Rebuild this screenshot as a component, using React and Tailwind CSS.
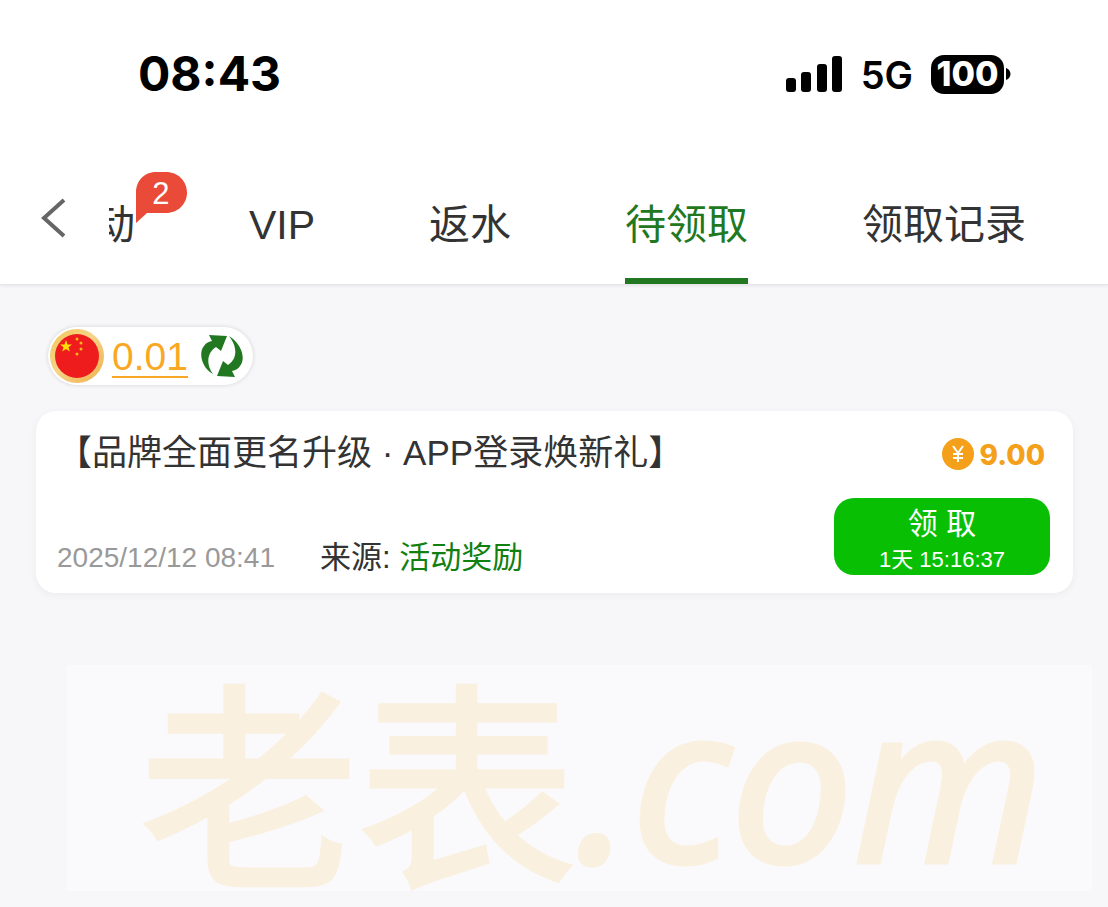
import React from 'react';

const tabs = [
  { label: '活动', badge: 2 },
  { label: 'VIP' },
  { label: '返水' },
  { label: '待领取', active: true },
  { label: '领取记录' },
];

function StatusBar() {
  return (
    <div className="flex h-[148px] items-center justify-between pr-[97px] pl-[138px] font-['Inter',sans-serif] text-black">
      <time className="text-[48px] leading-none font-bold">08:43</time>
      <div className="flex items-center gap-[18px]">
        <svg className="h-[36px] w-[58px]" viewBox="0 0 58 36" role="img" aria-label="信号">
          <rect x="1" y="22" width="10" height="14" rx="3" />
          <rect x="16" y="16" width="10" height="20" rx="3" />
          <rect x="32" y="8" width="10" height="28" rx="3" />
          <rect x="47" y="0" width="10" height="36" rx="3" />
        </svg>
        <span className="pt-[2px] text-[38px] leading-none font-semibold">5G</span>
        <div className="flex items-center gap-[2px]">
          <span className="flex h-[39px] w-[73px] items-center justify-center rounded-[13px] bg-black text-[34px] leading-none font-extrabold text-white">
            100
          </span>
          <svg className="h-[12px] w-[5px]" viewBox="0 0 5 12" aria-hidden="true">
            <path d="M0 0C6 2 6 10 0 12Z" />
          </svg>
        </div>
      </div>
    </div>
  );
}

function Badge({ count }) {
  return (
    <span className="absolute -top-[33px] left-full flex h-[51px] w-[52px] justify-center text-[31px] leading-[44px] text-white">
      <svg className="absolute inset-0 h-full w-full" viewBox="0 0 52 51" aria-hidden="true">
        <path d="M1 51V21C1 9 9 0 21 0H31C43 0 52 9 52 20.500C52 32 43 41 31 41H12Z" fill="#e94b38" />
      </svg>
      <span className="relative">{count}</span>
    </span>
  );
}

function TabBar() {
  return (
    <nav className="flex h-[136px] items-stretch">
      <button type="button" aria-label="返回" className="w-[109px] shrink-0 pt-[4px] pl-[40px]">
        <svg className="h-[40px] w-[27px]" viewBox="0 0 27 40" fill="none" stroke="#666" strokeWidth="4" aria-hidden="true">
          <path d="M24 2L4 20L24 38" />
        </svg>
      </button>
      <div className="flex min-w-0 flex-1 justify-end gap-[114px] overflow-hidden pr-[82px]">
        {tabs.map((tab) => (
          <button
            key={tab.label}
            type="button"
            aria-current={tab.active ? 'page' : undefined}
            className={
              tab.active
                ? 'shrink-0 border-b-[6px] border-[#217821] pt-[24px] text-[41px] leading-[41px] text-[#217821]'
                : 'shrink-0 border-b-[6px] border-transparent pt-[24px] text-[41px] leading-[41px] text-[#333]'
            }
          >
            <span className="relative block">
              {tab.label}
              {tab.badge && <Badge count={tab.badge} />}
            </span>
          </button>
        ))}
      </div>
    </nav>
  );
}

function FlagIcon() {
  return (
    <svg className="h-[56px] w-[56px]" viewBox="0 0 56 56" role="img" aria-label="CNY">
      <defs>
        <linearGradient id="ring" x1="0" y1="0" x2="1" y2="1">
          <stop offset="0" stopColor="#f0c858" />
          <stop offset="0.45" stopColor="#f6d488" />
          <stop offset="1" stopColor="#eeb04c" />
        </linearGradient>
      </defs>
      <circle cx="29" cy="28" r="27" fill="url(#ring)" />
      <circle cx="29" cy="28" r="22" fill="#ee1c1c" />
      <path d="M18 12L19.500 16.500H24L20.500 19.200L21.800 23.500L18 21L14.200 23.500L15.500 19.200L12 16.500H16.500Z" fill="#ffde00" />
      <g fill="#f9b51c">
        <circle cx="29" cy="11" r="1.500" />
        <circle cx="33" cy="15" r="1.500" />
        <circle cx="33" cy="21" r="1.500" />
        <circle cx="29" cy="26" r="1.500" />
      </g>
    </svg>
  );
}

function Balance() {
  return (
    <div className="ml-[12px] flex h-[58px] w-fit items-center rounded-full bg-white pr-[10px] shadow-[0_0_4px_rgba(0,0,0,0.15)]">
      <FlagIcon />
      <a href="#balance" className="mt-[2px] ml-[8px] border-b-2 border-[#f9a825] pt-[2px] text-[39px] leading-[38px] text-[#f9a825]">
        0.01
      </a>
      <button type="button" aria-label="刷新" className="ml-[13px]">
        <svg className="block h-[44px] w-[42px]" viewBox="0 0 42 44" fill="#217821" aria-hidden="true">
          <path d="M8 1L26 2L20 17L15 13C7 18 4 29 12 40C1 34 -3 19 3 12C5 9 7 8 11 7Z" />
          <path d="M34 43L16 42L22 27L27 31C35 26 38 15 28 2C41 10 45 25 39 32C37 35 35 36 31 37Z" />
        </svg>
      </button>
    </div>
  );
}

function RewardCard() {
  return (
    <article className="mt-[26px] flex h-[182px] justify-between rounded-[20px] bg-white pr-[23px] pl-[21px] shadow-[0_2px_8px_rgba(0,0,0,0.05)]">
      <div className="flex flex-col justify-between pt-[22px] pb-[15px]">
        <h2 className="text-[35px] leading-[40px] text-[#333]">【品牌全面更名升级 · APP登录焕新礼】</h2>
        <div className="flex items-center gap-[45px] leading-[40px]">
          <time className="text-[28px] text-[#999]">2025/12/12 08:41</time>
          <p className="text-[31px] text-[#333]">
            来源: <span className="text-[#118011]">活动奖励</span>
          </p>
        </div>
      </div>
      <div className="flex flex-col items-end justify-between pt-[26px] pb-[18px]">
        <div className="flex items-center gap-[6px] pr-[5px]">
          <svg className="h-[32px] w-[32px]" viewBox="0 0 32 32" fill="none" aria-hidden="true">
            <circle cx="16" cy="16" r="16" fill="#f5a01a" />
            <path d="M11 8L16 15L21 8M16 15V24M11 16H21M11 20H21" stroke="#fff" strokeWidth="2" />
          </svg>
          <span className="pt-[2px] font-['Inter',sans-serif] text-[28px] leading-[32px] font-extrabold text-[#f5a01a]">9.00</span>
        </div>
        <button type="button" className="flex h-[77px] w-[216px] flex-col items-center justify-center rounded-[20px] bg-[#08bf04] pt-[7px] text-white">
          <span className="text-[30px] leading-[40px]">领 取</span>
          <span className="text-[22px] leading-[32px]">1天 15:16:37</span>
        </button>
      </div>
    </article>
  );
}

export default function App() {
  return (
    <div className="min-h-screen bg-[#f7f7f9] font-['Liberation_Sans','Noto_Sans_CJK_SC',sans-serif]">
      <header className="border-b border-[#e6e6e8] bg-white shadow-[0_1px_3px_rgba(0,0,0,0.08)]">
        <StatusBar />
        <TabBar />
      </header>
      <main className="pt-[42px] pr-[35px] pl-[36px]">
        <Balance />
        <RewardCard />
      </main>
      <footer className="mt-[72px] mr-[16px] ml-[67px] flex h-[226px] items-center bg-[#fafafc] pl-[73px] leading-none whitespace-nowrap text-[#faf0df] [-webkit-text-stroke:5px_#faf0df] [stroke-linejoin:round]">
        <span className="pb-[6px] font-['Noto_Sans_CJK_SC',sans-serif] text-[218px] leading-[226px]">老表</span>
        <span className="font-['Noto_Sans',sans-serif] text-[218px] leading-[226px] italic">.com</span>
      </footer>
    </div>
  );
}
